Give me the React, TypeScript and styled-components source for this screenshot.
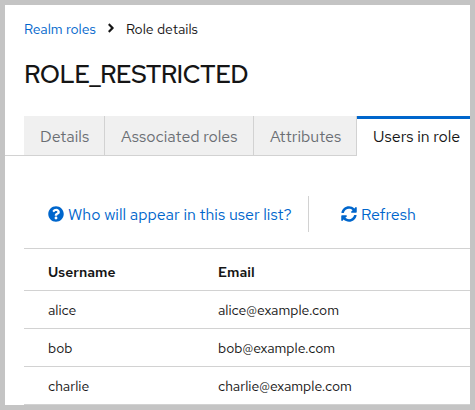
import React from 'react';
import styled, { createGlobalStyle } from 'styled-components';
import { FaAngleRight, FaQuestionCircle, FaSyncAlt } from 'react-icons/fa';

const GlobalStyle = createGlobalStyle`
  * { box-sizing: border-box; }
  body { margin: 0; background: #fff; }
`;

const Frame = styled.main`
  width: 475px;
  height: 410px;
  border: 5px solid #c4c4c4;
  overflow: hidden;
  background: #fff;
  color: #151515;
  font-family: 'Red Hat Text', Inter, 'Liberation Sans', sans-serif;
  font-size: 14px;
  white-space: nowrap;
`;

const Breadcrumb = styled.nav`
  display: flex;
  align-items: center;
  height: 20px;
  margin: 14px 0 0 19px;
`;

const Crumb = styled.span<{ $link?: boolean }>`
  color: ${({ $link }) => ($link ? '#0066cc' : '#151515')};
`;

const Chevron = styled(FaAngleRight)`
  width: 10px;
  height: 14px;
  margin: 0 10px 2px;
`;

const Title = styled.h1`
  margin: 16px 0 0 19px;
  height: 40px;
  line-height: 40px;
  font-size: 25px;
  font-weight: 500;
  letter-spacing: -0.7px;
`;

const Tabs = styled.div`
  display: flex;
  height: 40px;
  margin-top: 21px;
  font-size: 16px;

  &::before {
    content: '';
    flex: none;
    width: 19px;
    border-bottom: 1px solid #d2d2d2;
  }
`;

const Tab = styled.div<{ $width: number; $active?: boolean }>`
  flex: none;
  width: ${({ $width }) => $width}px;
  padding-left: 16px;
  line-height: 41px;
  color: ${({ $active }) => ($active ? '#151515' : '#6a6e73')};
  background: ${({ $active }) => ($active ? '#fff' : '#f0f0f0')};
  border: 0 solid #d2d2d2;
  border-width: ${({ $active }) => ($active ? '0' : '0 1px 1px 0')};
  box-shadow: ${({ $active }) => ($active ? 'inset 0 3px #0066cc' : 'none')};
`;

const Toolbar = styled.div`
  display: flex;
  align-items: center;
  height: 36px;
  margin: 40px 0 16px 43px;
  font-size: 16px;
`;

const Action = styled.div<{ $width?: number }>`
  display: flex;
  align-items: center;
  gap: 4px;
  width: ${({ $width }) => ($width ? `${$width}px` : 'auto')};
  color: #0066cc;

  svg {
    flex: none;
    width: 16px;
    height: 16px;
  }
`;

const Divider = styled.div`
  width: 1px;
  height: 36px;
  margin-right: 32px;
  background: #d2d2d2;
`;

const Table = styled.div`
  margin-left: 19px;
  border-top: 1px solid #d2d2d2;
`;

const Row = styled.div<{ $head?: boolean }>`
  display: grid;
  grid-template-columns: 170px 1fr;
  align-items: center;
  height: ${({ $head }) => ($head ? 42 : 38)}px;
  padding: ${({ $head }) => ($head ? '5px' : '1px')} 0 0 24px;
  border-bottom: 1px solid #d2d2d2;
  font-weight: ${({ $head }) => ($head ? 600 : 400)};
`;

const users = ['alice', 'bob', 'charlie'];

export default function App() {
  return (
    <>
      <GlobalStyle />
      <Frame>
        <Breadcrumb>
          <Crumb $link>Realm roles</Crumb>
          <Chevron />
          <Crumb>Role details</Crumb>
        </Breadcrumb>
        <Title>ROLE_RESTRICTED</Title>
        <Tabs>
          <Tab $width={81}>Details</Tab>
          <Tab $width={149}>Associated roles</Tab>
          <Tab $width={103}>Attributes</Tab>
          <Tab $width={118} $active>Users in role</Tab>
        </Tabs>
        <Toolbar>
          <Action $width={260}><FaQuestionCircle />Who will appear in this user list?</Action>
          <Divider />
          <Action><FaSyncAlt />Refresh</Action>
        </Toolbar>
        <Table>
          <Row $head>
            <span>Username</span>
            <span>Email</span>
          </Row>
          {users.map((user) => (
            <Row key={user}>
              <span>{user}</span>
              <span>{user}@example.com</span>
            </Row>
          ))}
        </Table>
      </Frame>
    </>
  );
}
